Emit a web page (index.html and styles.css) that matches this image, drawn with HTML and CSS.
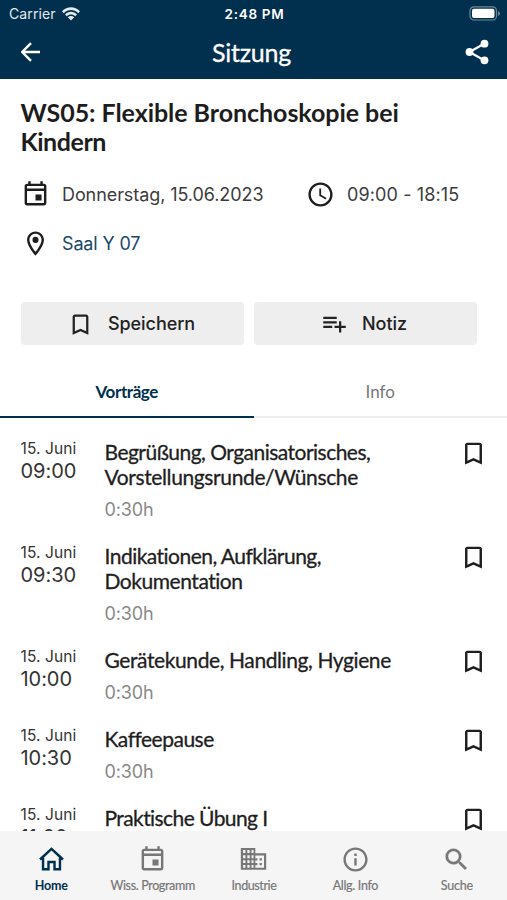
FILE: index.html
```html
<!DOCTYPE html>
<html lang="de">
<head>
<meta charset="utf-8">
<meta name="viewport" content="width=device-width, initial-scale=1">
<title>Sitzung</title>
<link rel="stylesheet" href="styles.css">
</head>
<body>
<svg class="defs" aria-hidden="true">
  <symbol id="bookmark" viewBox="0 0 24 24"><path d="M17 3H7c-1.100 0-2 .9-2 2v16l7-3 7 3V5c0-1.100-.9-2-2-2zm0 15-5-2.180L7 18V5h10v13z"/></symbol>
  <symbol id="event" viewBox="0 0 24 24"><path d="M19 3h-1V1h-2v2H8V1H6v2H5c-1.110 0-2 .9-2 2v14c0 1.100.89 2 2 2h14c1.100 0 2-.9 2-2V5c0-1.100-.9-2-2-2zm0 16H5V9h14v10zM5 7V5h14v2H5zm7 5h5v5h-5z"/></symbol>
</svg>
<div class="app">
  <header class="header">
    <div class="status">
      <div class="carrier"><span>Carrier</span>
        <svg class="wifi" viewBox="0 0 18 14"><path d="M0 4.300C5-1.200 13-1.200 18 4.300L16.200 6.200C12.200 2 5.800 2 1.800 6.200zM3 7.400C6.300 4 11.700 4 15 7.400L13.200 9.200C10.900 6.900 7.100 6.900 4.800 9.200zM5.800 10.300C7.600 8.500 10.400 8.500 12.200 10.300L9 13.600z"/></svg>
      </div>
      <div class="clock">2:48 PM</div>
      <svg class="battery" viewBox="0 0 31 15"><rect x="1" y=".8" width="26.500" height="13.200" rx="4" fill="none" stroke="#6d8798" stroke-width="1.200"/><rect x="3" y="2.800" width="22.500" height="9.200" rx="2"/><path d="M29 5v5q2-1 2-2.500T29 5z" fill="#6d8798"/></svg>
    </div>
    <div class="toolbar">
      <svg class="back" viewBox="0 0 20 20"><path d="M19 10H1.500M10 1.200 1.300 10 10 18.800" fill="none" stroke="#fff" stroke-width="2.400"/></svg>
      <h1>Sitzung</h1>
      <svg class="share" viewBox="0 0 24 26"><path d="M19.500 4.500 4.500 13l15 8.500" fill="none" stroke="#fff" stroke-width="2.200"/><circle cx="19.500" cy="4.700" r="3.900"/><circle cx="4.500" cy="13" r="3.900"/><circle cx="19.500" cy="21.300" r="3.900"/></svg>
    </div>
  </header>
  <main>
    <section class="session">
      <h2><span class="l1">WS05: Flexible Bronchoskopie bei</span><br><span class="l2">Kindern</span></h2>
      <div class="meta">
        <div class="fact date"><svg viewBox="0 0 24 24"><use href="#event"/></svg><span>Donnerstag, 15.06.2023</span></div>
        <div class="fact time"><svg viewBox="0 0 24 24"><path d="M11.990 2C6.470 2 2 6.480 2 12s4.470 10 9.990 10C17.520 22 22 17.520 22 12S17.520 2 11.990 2zM12 20c-4.420 0-8-3.580-8-8s3.580-8 8-8 8 3.580 8 8-3.580 8-8 8zm.5-13H11v6l5.250 3.150.75-1.230-4.500-2.670z"/></svg><span>09:00 - 18:15</span></div>
      </div>
      <div class="fact place"><svg viewBox="0 0 24 24"><path d="M12 2C8.130 2 5 5.130 5 9c0 5.250 7 13 7 13s7-7.750 7-13c0-3.870-3.130-7-7-7zM7 9c0-2.760 2.240-5 5-5s5 2.240 5 5c0 2.880-2.880 7.190-5 9.880C9.920 16.210 7 11.850 7 9z"/><circle cx="12" cy="9" r="2.500"/></svg><a>Saal Y 07</a></div>
      <div class="actions">
        <button class="save"><svg viewBox="0 0 24 24"><use href="#bookmark"/></svg><span>Speichern</span></button>
        <button class="note"><svg viewBox="0 0 24 24"><path d="M14 10H2v2h12v-2zm0-4H2v2h12V6zm4 8v-4h-2v4h-4v2h4v4h2v-4h4v-2h-4zM2 16h8v-2H2v2z"/></svg><span>Notiz</span></button>
      </div>
    </section>
    <nav class="tabs"><div class="tab active"><span>Vorträge</span></div><div class="tab"><span>Info</span></div></nav>
    <section class="talks">
      <article class="talk"><div class="when"><small>15. Juni</small><time>09:00</time></div><div class="what"><h3><span class="t1">Begrüßung, Organisatorisches,</span><br><span class="t2">Vorstellungsrunde/Wünsche</span></h3><p>0:30h</p></div><svg viewBox="0 0 24 24"><use href="#bookmark"/></svg></article>
      <article class="talk"><div class="when"><small>15. Juni</small><time>09:30</time></div><div class="what"><h3><span class="t3">Indikationen, Aufklärung,</span><br><span class="t4">Dokumentation</span></h3><p>0:30h</p></div><svg viewBox="0 0 24 24"><use href="#bookmark"/></svg></article>
      <article class="talk"><div class="when"><small>15. Juni</small><time>10:00</time></div><div class="what"><h3><span class="t5">Gerätekunde, Handling, Hygiene</span></h3><p>0:30h</p></div><svg viewBox="0 0 24 24"><use href="#bookmark"/></svg></article>
      <article class="talk"><div class="when"><small>15. Juni</small><time>10:30</time></div><div class="what"><h3><span class="t6">Kaffeepause</span></h3><p>0:30h</p></div><svg viewBox="0 0 24 24"><use href="#bookmark"/></svg></article>
      <article class="talk"><div class="when"><small>15. Juni</small><time>11:00</time></div><div class="what"><h3><span class="t7">Praktische Übung I</span></h3></div><svg viewBox="0 0 24 24"><use href="#bookmark"/></svg></article>
    </section>
  </main>
  <nav class="bottom">
    <div class="item current"><svg viewBox="0 0 24 24"><path d="M2.500 12 12 3.200l9.500 8.800M5 10.500V20h4.500v-6h5v6H19v-9.500" fill="none" stroke="currentColor" stroke-width="2"/></svg><span>Home</span></div>
    <div class="item"><svg viewBox="0 0 24 24"><use href="#event"/></svg><span class="b2">Wiss. Programm</span></div>
    <div class="item"><svg viewBox="0 0 24 24"><path fill-rule="evenodd" d="M1.500 2.500h12v4.300h9V20.500h-21zM3.400 4.200h1.900v2.500H3.400zm3.500 0h1.900v2.500H6.900zm3.500 0h1.600v2.500h-1.600zM3.400 8.400h1.900v2.500H3.400zm3.500 0h1.900v2.500H6.900zm3.500 0h1.600v2.500h-1.600zM3.400 12.600h1.900v2.300H3.400zm3.500 0h1.900v2.300H6.900zm3.500 0h1.600v2.300h-1.600zM3.400 16.600h1.900v2.300H3.400zm3.500 0h1.900v2.300H6.900zm3.500 0h1.600v2.300h-1.600zM13.500 8.600h7.200v10.200h-7.200v-2h1.700v-1.900h-1.700v-2h1.700V11h-1.700zM17 11h1.900v1.900H17zm0 3.900h1.900v1.900H17z"/></svg><span class="b3">Industrie</span></div>
    <div class="item"><svg viewBox="0 0 24 24"><path d="M11 7h2v2h-2zm0 4h2v6h-2zm1-9C6.480 2 2 6.480 2 12s4.480 10 10 10 10-4.480 10-10S17.520 2 12 2zm0 18c-4.410 0-8-3.590-8-8s3.590-8 8-8 8 3.590 8 8-3.590 8-8 8z"/></svg><span class="b4">Allg. Info</span></div>
    <div class="item"><svg viewBox="0 0 24 24"><path d="M15.500 14h-.79l-.28-.27A6.471 6.471 0 0 0 16 9.500 6.500 6.500 0 1 0 9.500 16c1.610 0 3.090-.59 4.230-1.570l.27.28v.79l5 4.990L20.490 19l-4.990-5zm-6 0C7.010 14 5 11.990 5 9.500S7.010 5 9.500 5 14 7.010 14 9.500 11.990 14 9.500 14z" stroke="currentColor" stroke-width=".3"/></svg><span class="b5">Suche</span></div>
  </nav>
</div>
</body>
</html>
```
FILE: styles.css
```css
* { box-sizing: border-box; margin: 0; padding: 0; }
body { font-family: Inter, sans-serif; color: #222; background: #fff; }
svg { display: block; fill: currentColor; flex: none; }
.defs { display: none; }
.app { height: 900px; display: flex; flex-direction: column; overflow: hidden; }
.header { background: #00304d; color: #fff; height: 79px; flex: none; }
.status { display: grid; grid-template-columns: 1fr auto 1fr; align-items: center; height: 27px; padding: 0 7px 0 9px; }
.carrier { display: flex; align-items: center; gap: 6px; font-size: 14px; letter-spacing: .1px; color: #e3eaee; }
.wifi { width: 18px; height: 14px; }
.clock { font-size: 13.5px; font-weight: 600; letter-spacing: .7px; }
.battery { width: 31px; height: 15px; justify-self: end; }
.toolbar { display: grid; grid-template-columns: 60px 1fr 67px; align-items: center; height: 51px; padding: 0 18px 0 21px; }
.back { width: 20px; height: 20px; margin-top: -2px; }
.share { width: 24px; height: 26px; justify-self: end; margin-top: -2px; }
h1 { font: 400 25px/30px Lato, sans-serif; letter-spacing: -.2px; text-align: center; margin-top: -2px; -webkit-text-stroke: .3px; }
main { flex: 1; min-height: 0; overflow: hidden; }
.session { height: 287px; padding: 19px 21px 0 20.5px; }
h2 { font: 700 25px/29px Lato, sans-serif; white-space: nowrap; color: #1d1d1d; }
.l1 { letter-spacing: -.05px; }
.l2 { letter-spacing: -.45px; }
.meta { display: flex; margin-top: 23px; }
.fact { display: flex; align-items: center; gap: 12.5px; height: 30px; font-size: 18px; color: #3c3c3c; white-space: nowrap; }
.fact svg { width: 29px; height: 29px; color: #1e1e1e; }
.date { width: 285px; letter-spacing: -.08px; }
.time { letter-spacing: .12px; }
.place { margin-top: 19px; letter-spacing: -.15px; }
.place a { color: #1a4868; }
.actions { display: grid; grid-template-columns: 223px 223px; gap: 10px; margin-top: 44px; }
.actions button { display: flex; align-items: center; justify-content: center; height: 43px; border: 0; border-radius: 4px; background: #eee; color: #222; font: 500 18px Inter, sans-serif; letter-spacing: -.05px; gap: 14px; padding-right: 2px; }
.actions svg { width: 27px; height: 27px; }
.actions .save svg { margin-top: 2px; }
.tabs { display: grid; grid-template-columns: 1fr 1fr; height: 52px; }
.tab { display: flex; align-items: center; justify-content: center; border-bottom: 2px solid #eee; font: 400 17px Lato, sans-serif; color: #777; }
.tab.active { color: #00304d; font-weight: 700; letter-spacing: -.4px; border-color: #00304d; }
.talks { padding: 20.5px 19.500px 0 20.500px; }
.talk { display: flex; align-items: flex-start; padding-bottom: 18.2px; }
.when { width: 84px; display: flex; flex-direction: column; padding-top: 1px; color: #333; }
.when small { font-size: 15.5px; line-height: 18px; letter-spacing: .1px; }
.when time { font-size: 20px; line-height: 26px; letter-spacing: -.05px; }
.what { flex: 1; white-space: nowrap; }
h3 { font: 400 21px/25px Lato, sans-serif; color: #1e1e1e; -webkit-text-stroke: .3px; }
.t1 { letter-spacing: -.52px; }
.t2 { letter-spacing: -.38px; }
.t3 { letter-spacing: -.52px; }
.t4 { letter-spacing: -.46px; }
.t5 { letter-spacing: -.4px; }
.t6 { letter-spacing: -.5px; }
.t7 { letter-spacing: -.58px; }
.what p { margin-top: 6px; font-size: 18px; line-height: 30px; letter-spacing: -.1px; color: #888; }
.talk > svg { width: 29px; height: 29px; color: #1e1e1e; }
.bottom { display: grid; grid-template-columns: repeat(5, 1fr); height: 69px; flex: none; background: #f5f5f5; }
.item { display: flex; flex-direction: column; align-items: center; padding: 14px 0 0 1px; color: #777; font: 400 12.500px/16px Lato, sans-serif; white-space: nowrap; -webkit-text-stroke: .2px; }
.item svg { width: 29px; height: 29px; margin-bottom: 4px; }
.item.current { color: #00304d; font-weight: 700; letter-spacing: -.2px; -webkit-text-stroke: 0; }
.b2 { letter-spacing: -.35px; }
.b3 { letter-spacing: -.4px; }
.b4 { letter-spacing: -.3px; }
.b5 { letter-spacing: -.2px; }
```
